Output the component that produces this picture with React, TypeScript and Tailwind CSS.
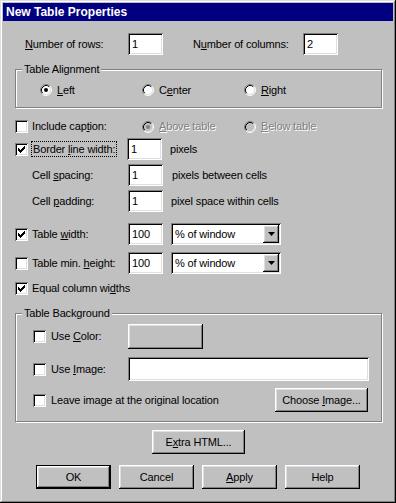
import React from "react";

const sunken =
  "bg-white shadow-[inset_1px_1px_#808080,inset_-1px_-1px_#ffffff,inset_2px_2px_#000000,inset_-2px_-2px_#dfdfdf]";
const raised =
  "bg-[#c0c0c0] shadow-[inset_-1px_-1px_#000000,inset_1px_1px_#ffffff,inset_-2px_-2px_#808080,inset_2px_2px_#dfdfdf]";

function Check({ on }: { on?: boolean }) {
  return (
    <div className={`w-[13px] h-[13px] shrink-0 flex items-center justify-center ${sunken}`}>
      {on && (
        <svg width="7" height="7" viewBox="0 0 7 7" shapeRendering="crispEdges">
          <rect x="6" y="0" width="1" height="1" fill="#000" />
          <rect x="5" y="1" width="2" height="1" fill="#000" />
          <rect x="0" y="2" width="1" height="1" fill="#000" />
          <rect x="4" y="2" width="3" height="1" fill="#000" />
          <rect x="0" y="3" width="2" height="1" fill="#000" />
          <rect x="3" y="3" width="3" height="1" fill="#000" />
          <rect x="0" y="4" width="5" height="1" fill="#000" />
          <rect x="1" y="5" width="3" height="1" fill="#000" />
          <rect x="2" y="6" width="1" height="1" fill="#000" />
        </svg>
      )}
    </div>
  );
}

function Radio({ on, disabled }: { on?: boolean; disabled?: boolean }) {
  return (
    <svg width="12" height="12" viewBox="0 0 12 12" className="shrink-0">
      <circle cx="6" cy="6" r="5" fill={disabled ? "#c0c0c0" : "#ffffff"} />
      <path d="M2.11 9.89 A5.5 5.5 0 0 1 9.89 2.11" stroke="#808080" fill="none" />
      <path d="M9.89 2.11 A5.5 5.5 0 0 1 2.11 9.89" stroke="#ffffff" fill="none" />
      <path d="M2.82 9.18 A4.5 4.5 0 0 1 9.18 2.82" stroke="#000000" fill="none" />
      <path d="M9.18 2.82 A4.5 4.5 0 0 1 2.82 9.18" stroke="#dfdfdf" fill="none" />
      {on && <circle cx="6" cy="6" r="2" fill={disabled ? "#808080" : "#000000"} />}
    </svg>
  );
}

function Field({ value, w }: { value?: string; w: string }) {
  return (
    <div className={`${w} h-[22px] shrink-0 flex items-center px-[4px] ${sunken}`}>{value}</div>
  );
}

function Combo() {
  return (
    <div className={`w-[110px] h-[22px] shrink-0 flex items-center p-[2px] ${sunken}`}>
      <span className="flex-1 pl-[2px]">% of window</span>
      <div className={`w-[16px] h-full flex items-center justify-center ${raised}`}>
        <svg width="7" height="4" viewBox="0 0 7 4">
          <path d="M0 0h7L3.5 4z" fill="#000" />
        </svg>
      </div>
    </div>
  );
}

function Button({ children, w, def }: { children?: React.ReactNode; w: string; def?: boolean }) {
  return (
    <div className={`${w} h-[24px] shrink-0 ${def ? "border border-black" : ""}`}>
      <div className={`w-full h-full flex items-center justify-center ${raised}`}>{children}</div>
    </div>
  );
}

function Disabled({ children }: { children: React.ReactNode }) {
  return <span className="text-[#808080] [text-shadow:1px_1px_0_#ffffff]">{children}</span>;
}

export default function App() {
  return (
    <div className="w-[396px] h-[503px] p-[3px] bg-[#c0c0c0] text-[11px] leading-[13px] tracking-[-0.15px] text-black font-['Liberation_Sans',Arial,sans-serif] shadow-[inset_-1px_-1px_#000000,inset_1px_1px_#dfdfdf,inset_-2px_-2px_#808080,inset_2px_2px_#ffffff]">
      <div className="h-[18px] bg-[#000080] text-white text-[12px] tracking-normal font-bold flex items-center pl-[3px]">
        New Table Properties
      </div>

      <div className="-mx-[3px] flex flex-col">
        {/* rows / columns */}
        <div className="mt-[12px] h-[22px] flex items-center">
          <span className="ml-[25px] w-[103px]">
            <u>N</u>umber of rows:
          </span>
          <Field value="1" w="w-[35px]" />
          <span className="ml-[30px] w-[110px]">
            N<u>u</u>mber of columns:
          </span>
          <Field value="2" w="w-[35px]" />
        </div>

        <fieldset className="mt-[8px] ml-[15px] w-[367px] h-[45px] border border-[#808080] shadow-[inset_1px_1px_#ffffff,1px_1px_#ffffff]">
          <legend className="ml-[6px] px-[2px] bg-[#c0c0c0]">Table Alignment</legend>
          <div className="mt-[7px] h-[14px] ml-[24px] flex items-center">
            <div className="w-[102px] flex items-center">
              <Radio on />
              <span className="ml-[5px]">
                <u>L</u>eft
              </span>
            </div>
            <div className="w-[102px] flex items-center">
              <Radio />
              <span className="ml-[5px]">
                C<u>e</u>nter
              </span>
            </div>
            <div className="w-[102px] flex items-center">
              <Radio />
              <span className="ml-[5px]">
                <u>R</u>ight
              </span>
            </div>
          </div>
        </fieldset>

        {/* caption */}
        <div className="mt-[12px] h-[13px] flex items-center">
          <div className="ml-[15px]">
            <Check />
          </div>
          <span className="ml-[4px] w-[110px]">
            Include cap<u>t</u>ion:
          </span>
          <div className="w-[102px] flex items-center">
            <Radio on disabled />
            <span className="ml-[5px]">
              <Disabled>
                <u>A</u>bove table
              </Disabled>
            </span>
          </div>
          <div className="flex items-center">
            <Radio disabled />
            <span className="ml-[5px]">
              <Disabled>
                <u>B</u>elow table
              </Disabled>
            </span>
          </div>
        </div>

        {/* border */}
        <div className="mt-[5px] h-[22px] flex items-center">
          <div className="ml-[15px]">
            <Check on />
          </div>
          <div className="ml-[3px] w-[96px]">
            <span className="border border-dotted border-black px-[1px] py-[1px]">
              Border <u>l</u>ine width:
            </span>
          </div>
          <Field value="1" w="w-[35px]" />
          <span className="ml-[8px]">pixels</span>
        </div>

        <div className="mt-[4px] h-[22px] flex items-center">
          <span className="ml-[32px] w-[96px]">
            Cell <u>s</u>pacing:
          </span>
          <Field value="1" w="w-[35px]" />
          <span className="ml-[9px]">pixels between cells</span>
        </div>

        <div className="mt-[4px] h-[22px] flex items-center">
          <span className="ml-[32px] w-[96px]">
            Cell <u>p</u>adding:
          </span>
          <Field value="1" w="w-[35px]" />
          <span className="ml-[8px]">pixel space within cells</span>
        </div>

        {/* width / height */}
        <div className="mt-[11px] h-[22px] flex items-center">
          <div className="ml-[15px]">
            <Check on />
          </div>
          <span className="ml-[4px] w-[96px]">
            Table <u>w</u>idth:
          </span>
          <Field value="100" w="w-[35px]" />
          <div className="ml-[8px]">
            <Combo />
          </div>
        </div>

        <div className="mt-[7px] h-[22px] flex items-center">
          <div className="ml-[15px]">
            <Check />
          </div>
          <span className="ml-[4px] w-[96px]">
            Table min. <u>h</u>eight:
          </span>
          <Field value="100" w="w-[35px]" />
          <div className="ml-[8px]">
            <Combo />
          </div>
        </div>

        <div className="mt-[8px] h-[13px] flex items-center">
          <div className="ml-[15px]">
            <Check on />
          </div>
          <span className="ml-[4px]">
            Equal column wi<u>d</u>ths
          </span>
        </div>

        {/* background */}
        <fieldset className="mt-[12px] ml-[15px] w-[367px] h-[115px] border border-[#808080] shadow-[inset_1px_1px_#ffffff,1px_1px_#ffffff]">
          <legend className="ml-[6px] px-[2px] bg-[#c0c0c0]">Table Background</legend>
          <div className="mt-[4px] h-[25px] flex items-center">
            <div className="ml-[17px]">
              <Check />
            </div>
            <span className="ml-[5px] w-[77px]">
              Use <u>C</u>olor:
            </span>
            <div className={`w-[75px] h-[25px] ${raised}`} />
          </div>
          <div className="mt-[8px] h-[24px] flex items-center">
            <div className="ml-[17px]">
              <Check />
            </div>
            <span className="ml-[5px] w-[77px]">
              Use <u>I</u>mage:
            </span>
            <div className={`w-[241px] h-[24px] ${sunken}`} />
          </div>
          <div className="mt-[7px] h-[24px] flex items-center">
            <div className="ml-[17px]">
              <Check />
            </div>
            <span className="ml-[5px] w-[224px]">
              Leave image at the ori<u>g</u>inal location
            </span>
            <Button w="w-[93px]">
              <span>
                Choose <u>I</u>mage...
              </span>
            </Button>
          </div>
        </fieldset>

        <div className="mt-[8px] flex">
          <div className="ml-[152px]">
            <Button w="w-[93px]">
              <span>
                E<u>x</u>tra HTML...
              </span>
            </Button>
          </div>
        </div>

        <div className="mt-[11px] flex gap-[8px] ml-[36px]">
          <Button w="w-[75px]" def>
            OK
          </Button>
          <Button w="w-[75px]">Cancel</Button>
          <Button w="w-[75px]">
            <span>
              <u>A</u>pply
            </span>
          </Button>
          <Button w="w-[75px]">Help</Button>
        </div>
      </div>
    </div>
  );
}
